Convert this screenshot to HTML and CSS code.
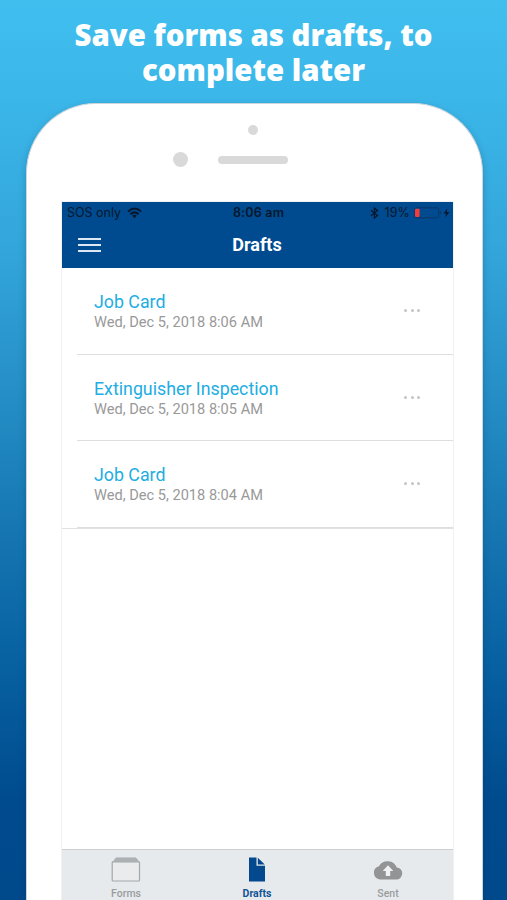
FILE: index.html
```html
<!DOCTYPE html>
<html lang="en">
<head>
<meta charset="utf-8">
<title>Drafts</title>
<link rel="stylesheet" href="styles.css">
</head>
<body>
<h1 class="headline">Save forms as drafts, to<br>complete later</h1>
<main class="phone">
  <div class="camera"></div>
  <div class="speaker-row"><i class="sensor"></i><i class="speaker"></i></div>
  <section class="screen">
    <header class="header">
      <div class="status">
        <div class="status-left"><span class="carrier">SOS only</span>
          <svg width="15" height="12" viewBox="0 0 15 12" fill="none" stroke="#07172d" stroke-width="2"><path d="M1 4.6Q7.5-1.6 14 4.6M3.4 7.3Q7.5 3.4 11.6 7.3"/><path d="M5.2 8.8Q7.5 6.8 9.8 8.8L7.5 11.2Z" fill="#07172d" stroke="none"/></svg>
        </div>
        <span class="clock">8:06 am</span>
        <div class="status-right">
          <svg width="9" height="12" viewBox="0 0 9 12" fill="none" stroke="#07172d" stroke-width="1.3"><path d="M1 3.3L7.5 8.6L4.4 11V1L7.5 3.4L1 8.7"/></svg>
          <span class="percent">19%</span>
          <svg width="36" height="12" viewBox="0 0 36 12"><rect x=".7" y=".8" width="24" height="10" rx="2" fill="none" stroke="#0b3567"/><rect x="1" y="1.7" width="4.6" height="8.2" rx=".8" fill="#f13d3c"/><path d="M26 4Q28 5.8 26 7.6Z" fill="#0b3567"/><path d="M33.3 1.4L29.6 6.5H32L31.2 10.2L35.4 5.1H32.7Z" fill="#07172d"/></svg>
        </div>
      </div>
      <div class="navbar">
        <span class="menu"><i></i><i></i><i></i></span>
        <h2 class="nav-title">Drafts</h2>
      </div>
    </header>
    <ul class="list">
      <li class="row"><div><div class="name">Job Card</div><div class="date">Wed, Dec 5, 2018 8:06 AM</div></div><span class="dots"><i></i><i></i><i></i></span></li>
      <li class="row"><div><div class="name">Extinguisher Inspection</div><div class="date">Wed, Dec 5, 2018 8:05 AM</div></div><span class="dots"><i></i><i></i><i></i></span></li>
      <li class="row"><div><div class="name">Job Card</div><div class="date">Wed, Dec 5, 2018 8:04 AM</div></div><span class="dots"><i></i><i></i><i></i></span></li>
    </ul>
    <nav class="tabs">
      <div class="tab"><svg width="30" height="26" viewBox="0 0 30 26"><path d="M4.5 1H25.5L28.5 5H1.5Z" fill="#b4b7b9"/><path d="M5 .9H25M3.5 2.9H26.5" stroke="#a4a7a9" stroke-width=".8"/><rect x="1.2" y="4.8" width="27.3" height="19.2" rx=".8" fill="#eaebec" stroke="#a4a7a9" stroke-width="1.2"/></svg><span>Forms</span></div>
      <div class="tab active"><svg width="30" height="26" viewBox="0 0 30 26"><path d="M7 .5H14.5V8.8H23V24.5H7Z" fill="#04498d"/><path d="M15.8 .7L22.8 7.6H15.8Z" fill="#04498d"/></svg><span>Drafts</span></div>
      <div class="tab"><svg width="30" height="26" viewBox="0 0 30 26"><path d="M7 22.5A6.8 6.8 0 0 1 5.9 9.2A10 10 0 0 1 23.8 10.4A6.1 6.1 0 0 1 24 22.5Z" fill="#929496"/><path d="M15 8.2L20.3 14H17.2V19H12.8V14H9.7Z" fill="#f0f1f2"/></svg><span>Sent</span></div>
    </nav>
  </section>
</main>
</body>
</html>
```
FILE: styles.css
```css
* { box-sizing: border-box; }
body {
  margin: 0;
  height: 900px;
  overflow: hidden;
  display: flex;
  flex-direction: column;
  font-family: Roboto, sans-serif;
  background: linear-gradient(#40bfef 0, #3bb6e8 100px, #32a4d9 260px, #2188c0 430px, #1676b2 530px, #0760a0 670px, #004b8e 800px, #00498b 900px);
}
.headline {
  margin: 0;
  height: 103px;
  flex: none;
  padding-top: 18px;
  font: 800 29.4px/35px "Open Sans", sans-serif;
  color: #fff;
  text-align: center;
  white-space: nowrap;
}
.phone {
  width: 457px;
  height: 797px;
  margin-left: 26px;
  flex: none;
  display: flex;
  flex-direction: column;
  background: #fff;
  border: 1px solid #cbd5da;
  border-bottom: 0;
  border-radius: 70px 70px 0 0;
  box-shadow: 0 3px 7px rgba(0, 40, 80, .25);
}
.camera {
  width: 10px;
  height: 10px;
  margin: 21px 0 0 221px;
  border-radius: 50%;
  background: #d9d9d9;
}
.speaker-row { display: flex; align-items: center; margin: 17px 0 0 146px; height: 15px; }
.sensor { width: 15px; height: 15px; border-radius: 50%; background: #d9d9d9; }
.speaker { width: 70px; height: 8px; border-radius: 4px; background: #d9d9d9; margin-left: 30px; }
.screen {
  width: 393px;
  height: 699px;
  margin: 34px 0 0 34px;
  display: flex;
  flex-direction: column;
  border: 1px solid #f1f1f2;
  border-bottom: 0;
}
.header { height: 66px; background: #004b8f; flex: none; }
.status {
  display: grid;
  grid-template-columns: 1fr auto 1fr;
  height: 21px;
  padding: 0 3px 0 5px;
  align-items: center;
  font: 12.5px/21px Inter, sans-serif;
  color: #07172d;
}
.status-left, .status-right { display: flex; align-items: center; }
.status-left { gap: 6px; }
.status-right { justify-content: flex-end; }
.percent { margin: 0 4px 0 6px; letter-spacing: .1px; }
.clock { font-weight: 600; letter-spacing: .2px; }
.navbar { display: grid; grid-template-columns: 23px 1fr 23px; align-items: center; height: 44px; padding: 0 17px 0 16px; }
.menu { display: grid; gap: 4px; }
.menu i { height: 2px; background: #dce8f3; }
.nav-title { margin: 0; text-align: center; font: 700 18px/24px Roboto, sans-serif; color: #fff; }
.list { margin: 0; padding: 0 0 0 15px; list-style: none; border-bottom: 1px solid #e1e1e1; }
.row {
  height: 86.5px;
  border-bottom: 1px solid #dedede;
  padding: 23px 33px 0 17px;
  display: flex;
  justify-content: space-between;
}
.name { font-size: 17.8px; line-height: 21px; color: #22ade2; }
.date { font-size: 14.6px; line-height: 21px; color: #999; }
.dots { display: flex; gap: 3.5px; margin-top: 18px; }
.dots i { width: 3px; height: 3px; border-radius: 50%; background: #c5c5c5; }
.tabs {
  margin-top: auto;
  height: 51px;
  flex: none;
  display: grid;
  grid-template-columns: 128px 134px 128px;
  background: #e7eaec;
  border-top: 1px solid #cdcfd1;
}
.tab { display: flex; flex-direction: column; align-items: center; padding-top: 7px; font: 500 10.5px/14px Roboto, sans-serif; color: #999c9f; }
.tab span { margin-top: 4px; }
.tab.active { color: #115497; font-weight: 700; }
```
